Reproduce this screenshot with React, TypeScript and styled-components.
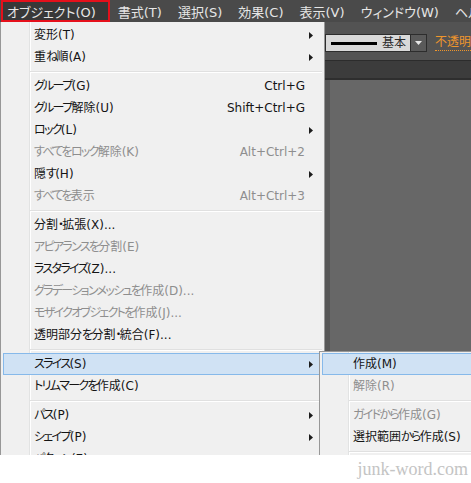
import styled, { createGlobalStyle, css } from "styled-components";

const GlobalStyle = createGlobalStyle`
  body {
    margin: 0;
    background: #ffffff;
  }
`;

const Page = styled.div`
  width: 471px;
  display: flex;
  flex-direction: column;
`;

const Screen = styled.div`
  width: 471px;
  height: 455px;
  position: relative;
  overflow: hidden;
  display: flex;
  flex-direction: column;
  background: #535353;
  font-family: "DejaVu Sans", "Noto Sans CJK JP", sans-serif;
  font-feature-settings: "palt";
`;

const MenuBar = styled.div`
  height: 22px;
  display: flex;
  align-items: stretch;
  background: #4a4a4a;
`;

const BarItem = styled.div<{ $active?: boolean }>`
  display: flex;
  align-items: center;
  padding: 0 8px;
  font-size: 13px;
  color: #e6e6e6;
  white-space: nowrap;
  flex-shrink: 0;

  ${({ $active }) =>
    $active &&
    css`
      background: #383838;
      box-shadow: inset 0 0 0 2px #e5101b;
      margin-left: 1px;
      padding: 0 14px 0 6px;
    `}
`;

const ControlBar = styled.div`
  height: 38px;
  display: flex;
  align-items: flex-start;
  padding: 12px 0 0 325px;
  box-sizing: border-box;
  background: #535353;
  overflow: hidden;
`;

const StrokeBox = styled.div`
  width: 86px;
  height: 18px;
  flex-shrink: 0;
  box-sizing: border-box;
  display: flex;
  align-items: center;
  gap: 5px;
  padding: 0 3px 0 5px;
  background: #d9d9d9;
  border: 1px solid #2d2d2d;
`;

const StrokeLine = styled.span`
  width: 46px;
  height: 3px;
  flex-shrink: 0;
  background: #000000;
`;

const StrokeName = styled.span`
  font-size: 12px;
  line-height: 16px;
  color: #2a2a2a;
  white-space: nowrap;
`;

const DropButton = styled.div`
  width: 16px;
  height: 18px;
  flex-shrink: 0;
  box-sizing: border-box;
  display: flex;
  align-items: center;
  justify-content: center;
  background: #5a5a5a;
  border: 1px solid #2d2d2d;
  border-left: none;
`;

const OpacityLink = styled.span`
  margin-left: 8px;
  margin-top: 1px;
  flex-shrink: 0;
  font-size: 12px;
  line-height: 15px;
  color: #f0962c;
  border-bottom: 1px dotted #f0962c;
  white-space: nowrap;
`;

const TabStrip = styled.div`
  height: 20px;
  box-sizing: border-box;
  background: #3c3c3c;
  border-top: 1px solid #2c2c2c;
  border-bottom: 2px solid #2e2e2e;
`;

const Workspace = styled.div`
  flex: 1;
  display: flex;
`;

const Dock = styled.div`
  width: 330px;
  background: #575757;
`;

const Artboard = styled.div`
  flex: 1;
  background: #676767;
`;

const menuSurface = css`
  position: absolute;
  box-sizing: border-box;
  background: linear-gradient(
      to right,
      transparent 28px,
      #e2e3e3 28px,
      #e2e3e3 29px,
      #ffffff 29px,
      #ffffff 30px,
      transparent 30px
    ),
    #f0f0f0;
  border: 1px solid #979797;
`;

const DropMenu = styled.div`
  ${menuSurface}
  left: 0;
  top: 22px;
  width: 325px;
  border-top: none;
  padding-top: 2px;
`;

const SubMenu = styled.div`
  ${menuSurface}
  left: 319px;
  top: 351px;
  width: 200px;
  padding-top: 1px;
`;

const Row = styled.div<{ $disabled?: boolean; $active?: boolean }>`
  height: 22px;
  margin: 0 2px;
  box-sizing: border-box;
  display: grid;
  grid-template-columns: 1fr auto 16px;
  align-items: center;
  padding-left: 30px;
  border: 1px solid transparent;
  font-size: 12px;
  line-height: 20px;
  white-space: nowrap;
  color: ${({ $disabled }) => ($disabled ? "#8e8e8e" : "#141414")};

  ${({ $active }) =>
    $active &&
    css`
      background: #d0e2f4;
      border-color: #86b9ea;
    `}
`;

// kana in the original UI font is much narrower than in Noto Sans CJK
const KanaRun = styled.span`
  letter-spacing: -1.7px;
`;

const Shortcut = styled.span`
  text-align: right;
`;

const ArrowCell = styled.span`
  display: flex;
  align-items: center;
  padding-left: 4px;
`;

const Separator = styled.div`
  height: 7px;
  margin: 0 2px 0 29px;
  box-sizing: border-box;
  padding-top: 3px;

  &::after {
    content: "";
    display: block;
    border-top: 1px solid #e0e0e0;
    border-bottom: 1px solid #ffffff;
  }
`;

const Footer = styled.div`
  height: 28px;
  display: flex;
  justify-content: flex-end;
  align-items: center;
  padding-right: 3px;
  font-family: "Liberation Serif", serif;
  font-size: 18px;
  color: #c4c4c4;
`;

type Item =
  | { sep: true }
  | {
      sep?: false;
      label: string;
      shortcut?: string;
      sub?: boolean;
      disabled?: boolean;
      active?: boolean;
    };

const objectMenu: Item[] = [
  { label: "変形(T)", sub: true },
  { label: "重ね順(A)", sub: true },
  { sep: true },
  { label: "グループ(G)", shortcut: "Ctrl+G" },
  { label: "グループ解除(U)", shortcut: "Shift+Ctrl+G" },
  { label: "ロック(L)", sub: true },
  { label: "すべてをロック解除(K)", shortcut: "Alt+Ctrl+2", disabled: true },
  { label: "隠す(H)", sub: true },
  { label: "すべてを表示", shortcut: "Alt+Ctrl+3", disabled: true },
  { sep: true },
  { label: "分割・拡張(X)..." },
  { label: "アピアランスを分割(E)", disabled: true },
  { label: "ラスタライズ(Z)..." },
  { label: "グラデーションメッシュを作成(D)...", disabled: true },
  { label: "モザイクオブジェクトを作成(J)...", disabled: true },
  { label: "透明部分を分割・統合(F)..." },
  { sep: true },
  { label: "スライス(S)", sub: true, active: true },
  { label: "トリムマークを作成(C)" },
  { sep: true },
  { label: "パス(P)", sub: true },
  { label: "シェイプ(P)", sub: true },
  { label: "パターン(E)", sub: true },
];

const sliceMenu: Item[] = [
  { label: "作成(M)", active: true },
  { label: "解除(R)", disabled: true },
  { sep: true },
  { label: "ガイドから作成(G)", disabled: true },
  { label: "選択範囲から作成(S)" },
  { sep: true },
];

const barItems = ["書式(T)", "選択(S)", "効果(C)", "表示(V)", "ウィンドウ(W)", "ヘルプ(H)"];

function Label({ text }: { text: string }) {
  const parts = text.split(/([\u3041-\u30ff]+)/);
  return (
    <span>
      {parts.map((p, i) =>
        i % 2 === 1 ? <KanaRun key={i}>{p}</KanaRun> : p
      )}
    </span>
  );
}

function SubArrow() {
  return (
    <svg width="4" height="7" viewBox="0 0 4 7">
      <polygon points="0,0 4,3.5 0,7" fill="#1c1c1c" />
    </svg>
  );
}

function MenuRows({ items }: { items: Item[] }) {
  return (
    <>
      {items.map((it, i) =>
        it.sep ? (
          <Separator key={i} />
        ) : (
          <Row key={i} $disabled={it.disabled} $active={it.active}>
            <Label text={it.label} />
            <Shortcut>{it.shortcut}</Shortcut>
            <ArrowCell>{it.sub && <SubArrow />}</ArrowCell>
          </Row>
        )
      )}
    </>
  );
}

export default function App() {
  return (
    <Page>
      <GlobalStyle />
      <Screen>
        <MenuBar>
          <BarItem $active>オブジェクト(O)</BarItem>
          {barItems.map((b) => (
            <BarItem key={b}>{b}</BarItem>
          ))}
        </MenuBar>

        <ControlBar>
          <StrokeBox>
            <StrokeLine />
            <StrokeName>基本</StrokeName>
          </StrokeBox>
          <DropButton>
            <svg width="7" height="4" viewBox="0 0 7 4">
              <polygon points="0,0 7,0 3.5,4" fill="#e6e6e6" />
            </svg>
          </DropButton>
          <OpacityLink>不透明度</OpacityLink>
        </ControlBar>

        <TabStrip />

        <Workspace>
          <Dock />
          <Artboard />
        </Workspace>

        <DropMenu>
          <MenuRows items={objectMenu} />
        </DropMenu>

        <SubMenu>
          <MenuRows items={sliceMenu} />
        </SubMenu>
      </Screen>
      <Footer>junk-word.com</Footer>
    </Page>
  );
}
